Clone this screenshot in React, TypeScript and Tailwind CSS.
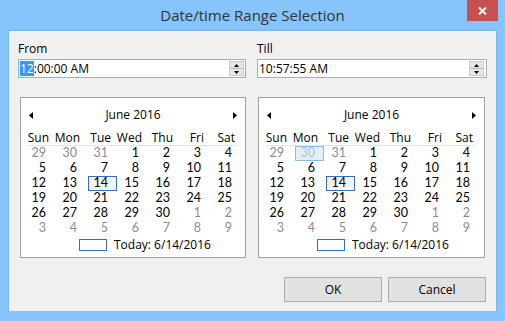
import React from "react";

const HEADERS = ["Sun", "Mon", "Tue", "Wed", "Thu", "Fri", "Sat"];

// 6 weeks of June 2016, [day, inMonth]
const WEEKS: Array<Array<[number, boolean]>> = [
  [[29, false], [30, false], [31, false], [1, true], [2, true], [3, true], [4, true]],
  [[5, true], [6, true], [7, true], [8, true], [9, true], [10, true], [11, true]],
  [[12, true], [13, true], [14, true], [15, true], [16, true], [17, true], [18, true]],
  [[19, true], [20, true], [21, true], [22, true], [23, true], [24, true], [25, true]],
  [[26, true], [27, true], [28, true], [29, true], [30, true], [1, false], [2, false]],
  [[3, false], [4, false], [5, false], [6, false], [7, false], [8, false], [9, false]],
];

function Arrow({ dir }: { dir: "left" | "right" }) {
  return (
    <svg width="4" height="7" viewBox="0 0 4 7">
      {dir === "left" ? <path d="M4 0 L0 3.5 L4 7 Z" fill="#000" /> : <path d="M0 0 L4 3.5 L0 7 Z" fill="#000" />}
    </svg>
  );
}

function Spin() {
  return (
    <div className="w-[15px] h-[15px] bg-[#e6e6e6] border border-[#cdcdcd] flex flex-col">
      <div className="flex-1 flex items-center justify-center border-b border-[#bdbdbd]">
        <svg width="5" height="3" viewBox="0 0 5 3">
          <path d="M2.5 0 L5 3 L0 3 Z" fill="#000" />
        </svg>
      </div>
      <div className="flex-1 flex items-center justify-center">
        <svg width="5" height="3" viewBox="0 0 5 3">
          <path d="M0 0 L5 0 L2.5 3 Z" fill="#000" />
        </svg>
      </div>
    </div>
  );
}

function Calendar({ hover }: { hover?: boolean }) {
  return (
    <div className="h-[161px] bg-white border border-[#a0a0a0] flex flex-col">
      <div className="mt-[9px] h-4 flex items-center justify-between px-[8px]">
        <Arrow dir="left" />
        <span className="text-[12px] text-black">June 2016</span>
        <Arrow dir="right" />
      </div>
      <div className="mt-[8px] pl-[5px] grid grid-cols-[repeat(7,31px)] h-[14px]">
        {HEADERS.map((h) => (
          <div key={h} className="w-[29px] h-[14px] flex items-center justify-end pr-[6px] text-[12px] leading-none text-black">
            {h}
          </div>
        ))}
      </div>
      <div className="ml-[7px] w-[209px] h-px bg-[#e3e3e3]" />
      <div className="pl-[5px] flex flex-col font-['Lato',sans-serif]">
        {WEEKS.map((week, wi) => (
          <div key={wi} className="grid grid-cols-[repeat(7,31px)] h-[15px]">
            {week.map(([d, inMonth], di) => {
              const today = wi === 2 && di === 2;
              const hot = hover && wi === 0 && di === 1;
              return (
                <div
                  key={di}
                  className={
                    "w-[29px] h-[15px] border flex items-center justify-end pr-[8px] text-[12.5px] leading-none " +
                    (today
                      ? "border-[#2f6fc4] bg-[#f3f3f3] text-black"
                      : hot
                      ? "border-[#86bde8] bg-[#e3f0fb] text-[#a8c4e2]"
                      : inMonth
                      ? "border-transparent text-black"
                      : "border-transparent text-[#8c8c8c]")
                  }
                >
                  {d}
                </div>
              );
            })}
          </div>
        ))}
      </div>
      <div className="mt-[3px] pl-[58px] flex items-center h-[12px]">
        <div className="w-[28px] h-[12px] border border-[#2f6fc4]" />
        <span className="ml-[7px] text-[12px] text-black leading-none">Today: 6/14/2016</span>
      </div>
    </div>
  );
}

export default function App() {
  return (
    <div className="w-[505px] h-[321px] bg-[#86c4fb] flex flex-col font-['Open_Sans',sans-serif]">
      <div className="relative h-[30px] flex items-center justify-center">
        <span className="text-[15px] text-[#333]">Date/time Range Selection</span>
        <div className="absolute right-[7px] top-0 w-[31px] h-[21px] bg-[#c75050] flex items-center justify-center">
          <svg width="9" height="8" viewBox="0 0 9 8">
            <path d="M1 0.5 L8 7.5 M8 0.5 L1 7.5" stroke="#fff" strokeWidth="1.8" />
          </svg>
        </div>
      </div>

      <div className="mx-[8px] h-[281px] bg-[#f0f0f0] border-t border-x border-[#78b8ef] flex flex-col">
        <div className="flex pl-[9px] pt-[10px] gap-[11px]">
          <div className="w-[228px] flex flex-col">
            <div className="h-4 mb-[2px] text-[12px] leading-4 text-black">From</div>
            <div className="h-[19px] bg-white border border-[#7eb4ea] flex items-center px-px">
              <span className="bg-[#3399ff] text-white text-[12px] leading-[15px]">12</span>
              <span className="flex-1 text-[12px] leading-[15px] text-black">:00:00 AM</span>
              <Spin />
            </div>
            <div className="mt-[19px] ml-[2px]">
              <Calendar />
            </div>
          </div>
          <div className="w-[230px] flex flex-col">
            <div className="h-4 mb-[2px] text-[12px] leading-4 text-black">Till</div>
            <div className="h-[19px] bg-white border border-[#abadb3] flex items-center pl-px pr-[2px]">
              <span className="flex-1 text-[12px] leading-[15px] text-black">10:57:55 AM</span>
              <Spin />
            </div>
            <div className="mt-[19px] ml-px mr-[2px]">
              <Calendar hover />
            </div>
          </div>
        </div>

        <div className="mt-[19px] flex justify-end gap-[6px] pr-[10px]">
          <button className="w-[98px] h-[25px] bg-[#e1e1e1] border border-[#adadad] text-[12px] text-black">OK</button>
          <button className="w-[98px] h-[25px] bg-[#e1e1e1] border border-[#adadad] text-[12px] text-black">Cancel</button>
        </div>
      </div>
    </div>
  );
}
